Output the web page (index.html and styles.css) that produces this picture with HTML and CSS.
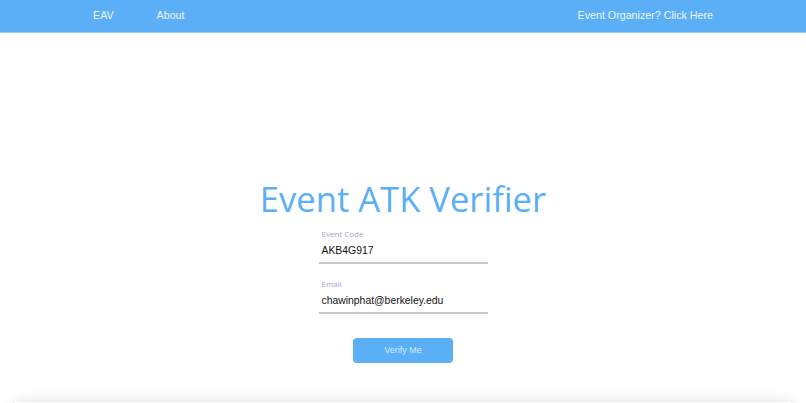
FILE: index.html
```html
<!DOCTYPE html>
<html>
<head>
<meta charset="utf-8">
<link rel="stylesheet" href="styles.css">
</head>
<body>
<nav class="navbar">
  <div class="nav-inner">
    <div class="nav-left">
      <a class="nav-link">EAV</a>
      <a class="nav-link">About</a>
    </div>
    <a class="nav-link">Event Organizer? Click Here</a>
  </div>
</nav>
<main class="main">
  <h1 class="title">Event ATK Verifier</h1>
  <form class="form">
    <label class="field">
      <span class="field-label">Event Code</span>
      <span class="field-value">AKB4G917</span>
    </label>
    <label class="field">
      <span class="field-label">Email</span>
      <span class="field-value">chawinphat@berkeley.edu</span>
    </label>
    <button type="button" class="btn">Verify Me</button>
  </form>
</main>
<div class="footer-card"></div>
</body>
</html>
```

FILE: styles.css
```css
* { box-sizing: border-box; }
html, body { margin: 0; padding: 0; background: #fff; overflow: hidden; height: 403px; }
body { font-family: "Liberation Sans", Arial, sans-serif; }

.navbar {
  height: 33px;
  background: #5aaff7;
  border-bottom: 1px solid #92c9f9;
}
.nav-inner {
  margin: 0 93px;
  height: 32px;
  padding-bottom: 2px;
  display: flex;
  align-items: center;
  justify-content: space-between;
}
.nav-left { display: flex; gap: 43px; }
.nav-link {
  color: #eef6fe;
  font-size: 10.7px;
  text-decoration: none;
}

.main {
  display: flex;
  flex-direction: column;
  align-items: center;
  padding-top: 146px;
}
.title {
  margin: 0;
  font-family: "Open Sans", sans-serif;
  font-weight: 400;
  font-size: 34.6px;
  line-height: 40px;
  color: #5aaff7;
}
.form {
  display: flex;
  flex-direction: column;
  align-items: center;
  width: 169px;
  margin-top: 9px;
}
.field {
  display: flex;
  flex-direction: column;
  width: 169px;
  padding: 0 3px 3px;
  border-bottom: 2px solid #c9c9c9;
  margin-bottom: 13.5px;
}
.field-label {
  font-family: "Open Sans", sans-serif;
  font-size: 8px;
  line-height: 12px;
  color: #a2a3c8;
}
.field-value {
  margin-top: 3px;
  font-size: 10.4px;
  line-height: 16px;
  color: #111;
}
.btn {
  margin-top: 10.5px;
  width: 100px;
  height: 25px;
  border: none;
  border-radius: 4px;
  background: #5aaff7;
  color: #d6e9fc;
  font-family: "Liberation Sans", Arial, sans-serif;
  font-size: 9px;
  padding: 0;
}
.footer-card {
  margin: 39px 15px 0;
  height: 40px;
  background: #fff;
  box-shadow: 0 0 14px rgba(0,0,0,0.14);
}
```
